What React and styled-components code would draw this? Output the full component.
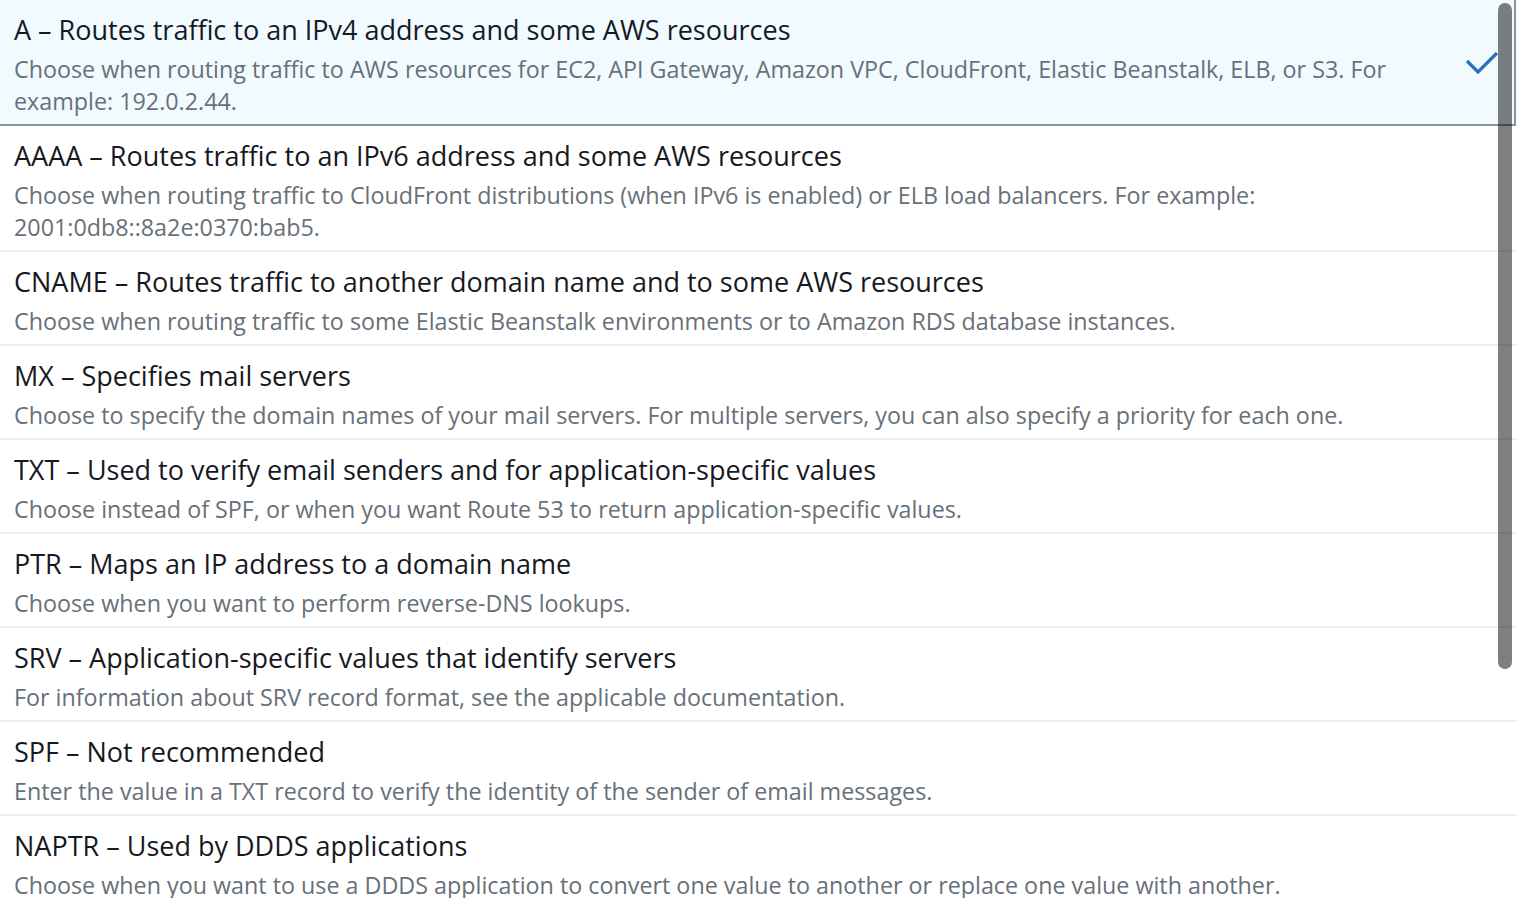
import styled, { createGlobalStyle } from "styled-components";

const GlobalStyle = createGlobalStyle`
  html, body {
    margin: 0;
    padding: 0;
    background: #ffffff;
  }
  body {
    font-family: "Open Sans", "Noto Sans", sans-serif;
    -webkit-font-smoothing: antialiased;
  }
`;

const records = [
  {
    type: "A",
    label: "Routes traffic to an IPv4 address and some AWS resources",
    description:
      "Choose when routing traffic to AWS resources for EC2, API Gateway, Amazon VPC, CloudFront, Elastic Beanstalk, ELB, or S3. For example: 192.0.2.44.",
  },
  {
    type: "AAAA",
    label: "Routes traffic to an IPv6 address and some AWS resources",
    description:
      "Choose when routing traffic to CloudFront distributions (when IPv6 is enabled) or ELB load balancers. For example: 2001:0db8::8a2e:0370:bab5.",
  },
  {
    type: "CNAME",
    label: "Routes traffic to another domain name and to some AWS resources",
    description:
      "Choose when routing traffic to some Elastic Beanstalk environments or to Amazon RDS database instances.",
  },
  {
    type: "MX",
    label: "Specifies mail servers",
    description:
      "Choose to specify the domain names of your mail servers. For multiple servers, you can also specify a priority for each one.",
  },
  {
    type: "TXT",
    label: "Used to verify email senders and for application-specific values",
    description:
      "Choose instead of SPF, or when you want Route 53 to return application-specific values.",
  },
  {
    type: "PTR",
    label: "Maps an IP address to a domain name",
    description: "Choose when you want to perform reverse-DNS lookups.",
  },
  {
    type: "SRV",
    label: "Application-specific values that identify servers",
    description:
      "For information about SRV record format, see the applicable documentation.",
  },
  {
    type: "SPF",
    label: "Not recommended",
    description:
      "Enter the value in a TXT record to verify the identity of the sender of email messages.",
  },
  {
    type: "NAPTR",
    label: "Used by DDDS applications",
    description:
      "Choose when you want to use a DDDS application to convert one value to another or replace one value with another.",
  },
];

const ListBox = styled.ul`
  position: relative;
  list-style: none;
  margin: 0;
  padding: 0;
  height: 898px;
  overflow: hidden;
  background: #ffffff;
`;

const Option = styled.li`
  display: flex;
  align-items: center;
  padding: 7px ${(p) => (p.$selected ? "15px" : "17px")} 7px 14px;
  border-bottom: 2px solid ${(p) => (p.$selected ? "#879596" : "#eaeded")};
  border-right: ${(p) => (p.$selected ? "2px solid #879596" : "0")};
  background: ${(p) => (p.$selected ? "#f1faff" : "#ffffff")};
`;

const Text = styled.div`
  flex: 1;
  min-width: 0;
  max-width: 1420px;
`;

const Label = styled.div`
  font-size: 27px;
  line-height: 46px;
  color: #16191f;
`;

const Description = styled.div`
  font-size: 23.3px;
  line-height: 32px;
  color: #687078;
`;

const Check = styled.svg`
  flex: none;
  margin-left: auto;
  width: 34px;
  height: 26px;
`;

const Thumb = styled.div`
  position: absolute;
  top: 3px;
  right: 4px;
  width: 14px;
  height: 666px;
  border-radius: 7px;
  background: rgba(0, 0, 0, 0.5);
`;

const App = () => {
  return (
    <>
      <GlobalStyle />
      <ListBox role="listbox">
        {records.map((r, i) => (
          <Option key={r.type} $selected={i === 0} role="option">
            <Text>
              <Label>
                {r.type} – {r.label}
              </Label>
              <Description>{r.description}</Description>
            </Text>
            {i === 0 && (
              <Check viewBox="0 0 34 26">
                <path
                  d="M2 12 L13 23 L32 4"
                  fill="none"
                  stroke="#2b72bd"
                  strokeWidth="3.2"
                />
              </Check>
            )}
          </Option>
        ))}
        <Thumb />
      </ListBox>
    </>
  );
};

export default App;
